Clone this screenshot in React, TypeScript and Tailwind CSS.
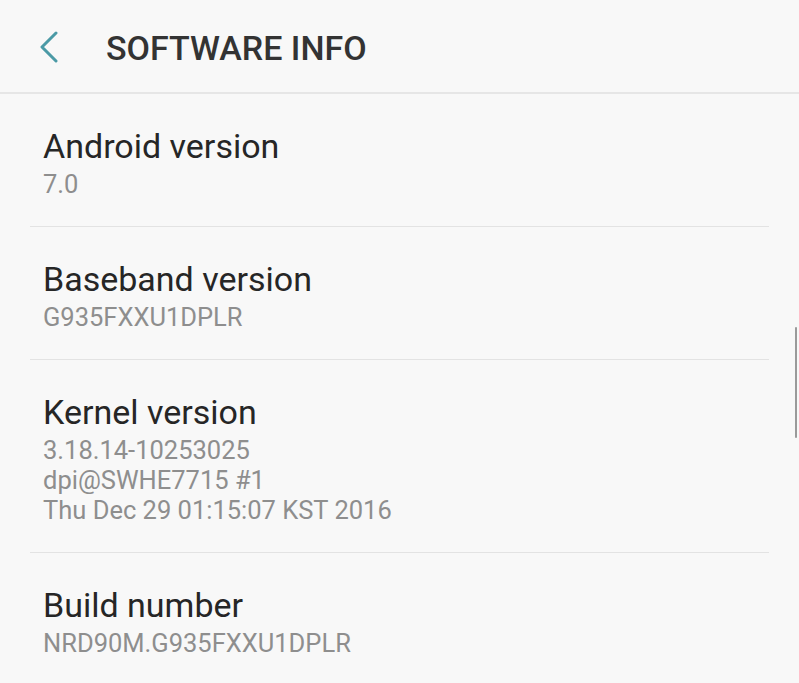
import React from "react";

const rows: { title: string; values: string[] }[] = [
  { title: "Android version", values: ["7.0"] },
  { title: "Baseband version", values: ["G935FXXU1DPLR"] },
  {
    title: "Kernel version",
    values: ["3.18.14-10253025", "dpi@SWHE7715 #1", "Thu Dec 29 01:15:07 KST 2016"],
  },
  { title: "Build number", values: ["NRD90M.G935FXXU1DPLR"] },
];

export default function App() {
  return (
    <div
      className="relative w-[799px] h-[683px] overflow-hidden bg-[#f8f8f8]"
      style={{ fontFamily: "Roboto, 'Noto Sans', sans-serif" }}
    >
      <header className="flex h-[94px] items-center border-b-2 border-[#e6e6e6]">
        <svg width="20" height="32" viewBox="0 0 20 32" className="ml-[39px] mt-[1px]">
          <path d="M17 2 L3 16 L17 30" fill="none" stroke="#4b9aa6" strokeWidth="3" strokeLinecap="round" strokeLinejoin="round" />
        </svg>
        <h1 className="ml-[47px] mt-[4px] text-[34px] font-medium leading-none text-[#333333]">
          SOFTWARE INFO
        </h1>
      </header>
      <div className="flex flex-col">
        {rows.map((r, i) => (
          <div key={r.title} className={i > 0 ? "mx-[30px] border-t border-[#e3e3e3]" : "mx-[30px]"}>
            <div className="px-[13px] pt-[32px] pb-[27px]">
              <div className="text-[34px] leading-[40px] text-[#262626]">{r.title}</div>
              <div className="mt-[3px]">
                {r.values.map((v) => (
                  <div key={v} className="text-[25.5px] leading-[30px] text-[#8e8e8e]">
                    {v}
                  </div>
                ))}
              </div>
            </div>
          </div>
        ))}
      </div>
      <div className="absolute left-[795px] top-[327px] h-[111px] w-[2px] rounded-full bg-[#9a9a9a]" />
    </div>
  );
}
